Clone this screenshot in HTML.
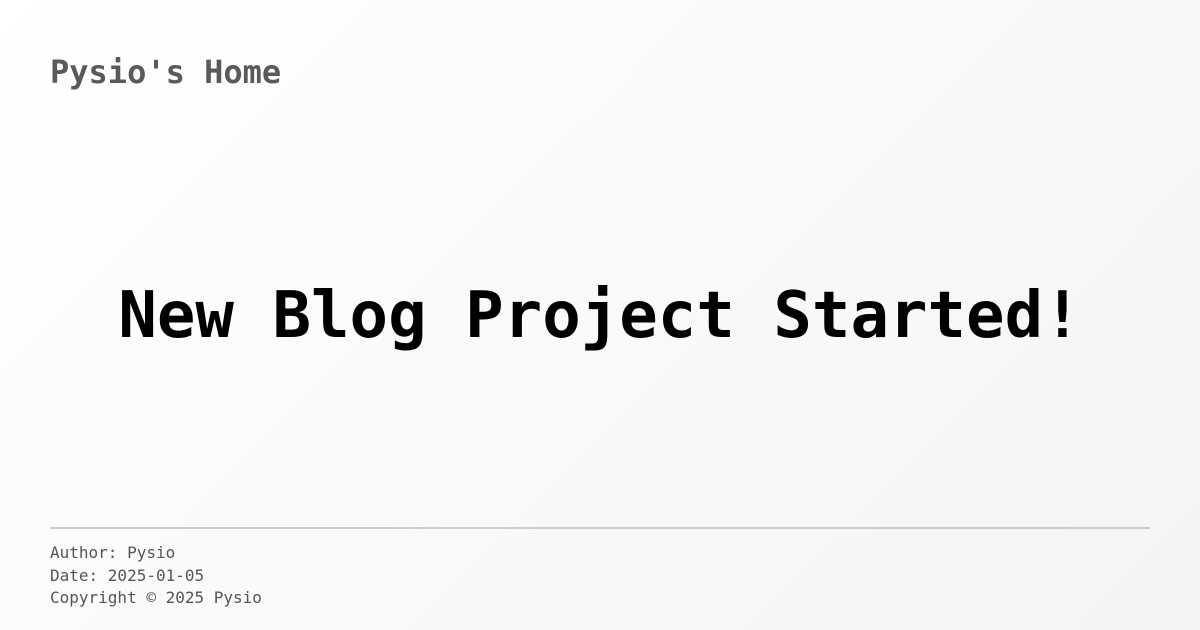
<!DOCTYPE html>
<html><head><meta charset="utf-8"><style>
html,body{margin:0;padding:0;}
body{width:1200px;height:630px;overflow:hidden;position:relative;background:linear-gradient(135deg,#ffffff 0%,#f4f4f4 100%);font-family:"DejaVu Sans Mono",monospace;}
.h{position:absolute;left:50px;top:52px;font-size:32px;font-weight:bold;color:#5a5a5a;line-height:40px;}
.t{position:absolute;left:0;width:1200px;top:276px;text-align:center;font-size:64px;font-weight:bold;color:#000;line-height:80px;}
.line{position:absolute;left:50px;width:1100px;top:527px;height:2px;background:#cccccc}
.f{position:absolute;left:50px;top:542px;font-size:16px;line-height:22.5px;color:#555;}
</style></head><body>
<div class="h">Pysio's Home</div>
<div class="t">New Blog Project Started!</div>
<div class="line"></div>
<div class="f">Author: Pysio<br>Date: 2025-01-05<br>Copyright © 2025 Pysio</div>
</body></html>
